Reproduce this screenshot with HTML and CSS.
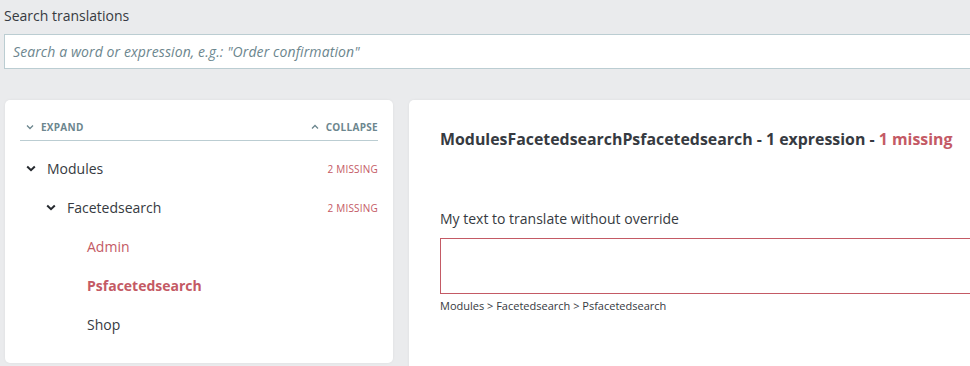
FILE: index.html
```html
<!DOCTYPE html>
<html>
<head>
<meta charset="utf-8">
<link rel="stylesheet" href="styles.css">
</head>
<body>
<div class="page">
  <div class="search">
    <div class="search-label">Search translations</div>
    <div class="search-input">Search a word or expression, e.g.: "Order confirmation"</div>
  </div>
  <div class="columns">
    <div class="card tree-card">
      <div class="tree-head">
        <span class="tree-action">
          <svg width="8" height="6" viewBox="0 0 8 6"><path d="M1 1.5 L4 4.5 L7 1.5" fill="none" stroke="#6c868e" stroke-width="1.3"/></svg>
          Expand
        </span>
        <span class="tree-action">
          <svg width="8" height="6" viewBox="0 0 8 6"><path d="M1 4.5 L4 1.5 L7 4.5" fill="none" stroke="#6c868e" stroke-width="1.3"/></svg>
          Collapse
        </span>
      </div>
      <div class="tree">
        <div class="row lvl0">
          <svg class="caret" width="10" height="7" viewBox="0 0 10 7"><path d="M1.2 1.5 L5 5.2 L8.8 1.5" fill="none" stroke="#25292e" stroke-width="2"/></svg>
          <span class="name">Modules</span>
          <span class="missing">2 missing</span>
        </div>
        <div class="row lvl1">
          <svg class="caret" width="10" height="7" viewBox="0 0 10 7"><path d="M1.2 1.5 L5 5.2 L8.8 1.5" fill="none" stroke="#25292e" stroke-width="2"/></svg>
          <span class="name">Facetedsearch</span>
          <span class="missing">2 missing</span>
        </div>
        <div class="row lvl2 red"><span class="name">Admin</span></div>
        <div class="row lvl2 red active"><span class="name">Psfacetedsearch</span></div>
        <div class="row lvl2"><span class="name">Shop</span></div>
      </div>
    </div>
    <div class="card main-card">
      <h2 class="title">ModulesFacetedsearchPsfacetedsearch - 1 expression - <span class="red-text">1 missing</span></h2>
      <div class="field-label">My text to translate without override</div>
      <div class="textarea"></div>
      <div class="crumb">Modules &gt; Facetedsearch &gt; Psfacetedsearch</div>
    </div>
  </div>
</div>
</body>
</html>
```
FILE: styles.css
```css
html, body {
  margin: 0;
  padding: 0;
  background: #eaebed;
  overflow: hidden;
  height: 366px;
}
body {
  font-family: "Open Sans", "Noto Sans", sans-serif;
  color: #363a41;
}
.page {
  width: 1020px;
  padding-left: 4px;
}
.search {
  padding-top: 6px;
}
.search-label {
  font-size: 14px;
  line-height: 20px;
  color: #363a41;
  margin-bottom: 8px;
}
.search-input {
  box-sizing: border-box;
  height: 35px;
  border: 1px solid #bbcdd2;
  background: #fff;
  font-size: 14px;
  font-style: italic;
  color: #6c868e;
  line-height: 33px;
  padding-left: 8px;
  letter-spacing: 0.1px;
}
.columns {
  display: flex;
  gap: 16px;
  margin-top: 31px;
  padding-left: 1px;
}
.card {
  background: #fff;
  border-radius: 5px;
  box-shadow: 0 0 3px rgba(0, 0, 0, 0.06);
}
.tree-card {
  width: 388px;
  height: 263px;
  box-sizing: border-box;
  padding: 18px 15px 0 15px;
  flex: none;
}
.tree-head {
  display: flex;
  justify-content: space-between;
  height: 18px;
  padding-bottom: 4px;
  border-bottom: 1px solid #bbcdd2;
  font-size: 10px;
  font-weight: 700;
  text-transform: uppercase;
  letter-spacing: 0.3px;
  color: #6c868e;
  line-height: 18px;
}
.tree-head .tree-action:first-child {
  padding-left: 6px;
}
.tree-action svg {
  margin-right: 4px;
  vertical-align: 1px;
}
.tree {
  padding-top: 8px;
}
.row {
  display: flex;
  align-items: center;
  height: 39px;
  font-size: 14px;
}
.caret {
  flex: none;
  margin-right: 11px;
}
.lvl0 { padding-left: 6px; }
.lvl1 { padding-left: 26px; }
.lvl2 { padding-left: 67px; }
.name { flex: 1; }
.missing {
  font-size: 10px;
  text-transform: uppercase;
  color: #c45a65;
  letter-spacing: 0.2px;
}
.red { color: #c45a65; }
.active { font-weight: 700; }
.main-card {
  flex: 1;
  height: 280px;
  padding: 28px 0 0 31px;
  border-bottom-left-radius: 0;
  border-bottom-right-radius: 0;
}
.title {
  margin: 0;
  font-size: 15.9px;
  line-height: 22px;
  font-weight: 700;
  color: #363a41;
}
.red-text { color: #c45a65; }
.field-label {
  margin-top: 59px;
  font-size: 14px;
  line-height: 20px;
}
.textarea {
  margin-top: 9px;
  height: 56px;
  box-sizing: border-box;
  border: 1px solid #c45a65;
}
.crumb {
  margin-top: 4px;
  font-size: 11px;
  line-height: 16px;
  color: #363a41;
}
```
